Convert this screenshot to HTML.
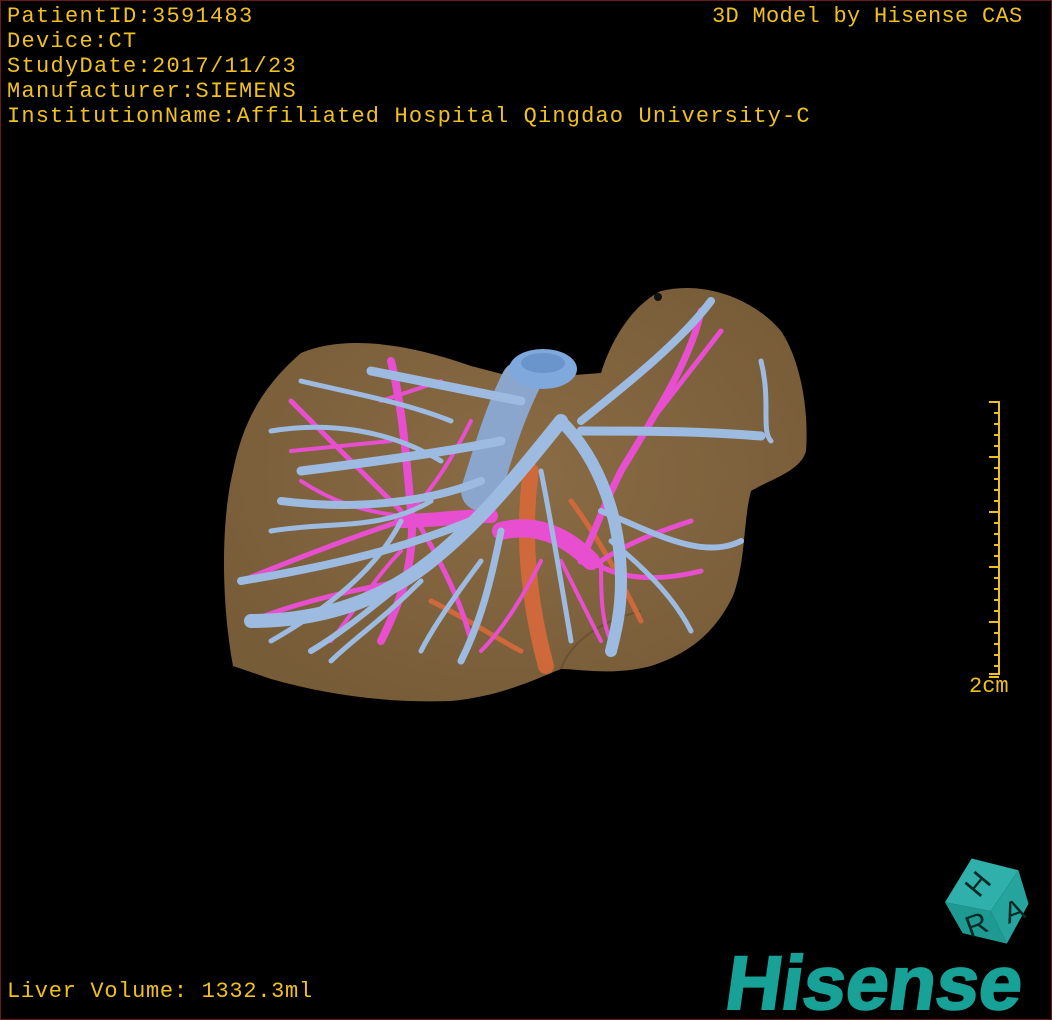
<!DOCTYPE html>
<html><head><meta charset="utf-8"><style>
html,body{margin:0;padding:0;background:#000;}
#w{position:relative;width:1050px;height:1018px;border:1px solid #6a1a1a;overflow:hidden;background:#000;}
.t{position:absolute;font-family:"Liberation Mono",monospace;font-size:22px;color:#f0c020;letter-spacing:1.3px;white-space:pre;line-height:25px;}
</style></head><body><div id="w">
<svg width="1050" height="1018" style="position:absolute;left:0;top:0">
<defs><radialGradient id="lg" cx="0.5" cy="0.45" r="0.6"><stop offset="0" stop-color="#8a6c45"/><stop offset="1" stop-color="#775c38"/></radialGradient></defs>
<path d="M232,665 C220,600 220,520 232,470 C242,420 262,385 300,352 C340,335 400,340 470,365 L520,378 L600,372 C610,340 630,305 660,290 C700,280 750,295 780,330 C800,360 808,410 805,450 C800,470 770,478 750,490 C742,520 745,560 732,595 C715,630 690,652 650,665 C610,675 580,668 560,668 C530,680 500,695 450,700 C390,702 330,695 270,678 Z" fill="url(#lg)"/>
<path d="M560,668 C570,640 600,620 640,610" stroke="#5e4a2e" stroke-width="2" fill="none" opacity=".6"/>
<g fill="none" stroke-linecap="round" stroke="#d8693a" opacity=".9">
<path d="M530,470 C520,540 530,610 545,665" stroke-width="16"/>
<path d="M430,600 C470,620 500,640 520,650" stroke-width="5"/>
<path d="M570,500 C600,540 620,580 640,620" stroke-width="5"/>
</g>
<g fill="none" stroke-linecap="round" stroke="#e84fd0">
<path d="M700,310 C690,360 650,420 620,470 C600,510 590,540 580,560" stroke-width="7"/>
<path d="M650,420 L720,330" stroke-width="5"/>
<path d="M500,530 C540,520 570,540 590,560" stroke-width="18"/>
<path d="M400,520 C430,520 460,515 490,515" stroke-width="14"/>
<path d="M390,360 C400,400 405,450 410,510 C415,560 400,600 380,640" stroke-width="8"/>
<path d="M290,400 C320,430 360,470 400,510" stroke-width="5"/>
<path d="M240,580 C290,560 340,540 400,520" stroke-width="5"/>
<path d="M250,620 C300,600 350,590 400,580" stroke-width="5"/>
<path d="M300,480 C330,500 360,510 400,515" stroke-width="4"/>
<path d="M410,510 C440,560 460,600 470,640" stroke-width="5"/>
<path d="M330,640 C360,600 380,570 400,550" stroke-width="4"/>
<path d="M470,420 C450,460 430,490 410,510" stroke-width="4"/>
<path d="M600,560 C630,540 660,530 690,520" stroke-width="5"/>
<path d="M590,560 C620,580 660,580 700,570" stroke-width="5"/>
<path d="M600,560 C600,590 600,620 610,640" stroke-width="4"/>
<path d="M540,560 C520,600 500,630 480,650" stroke-width="4"/>
<path d="M560,560 C580,600 590,620 600,640" stroke-width="4"/>
<path d="M380,400 L440,380" stroke-width="4"/>
<path d="M290,450 L390,440" stroke-width="4"/>
</g>
<g fill="none" stroke-linecap="round" stroke="#9dbbe0">
<path d="M520,380 C500,420 490,460 480,490" stroke-width="40" stroke="#8aa6cc"/>
<path d="M560,420 C520,470 480,520 430,560 C380,600 320,620 250,620" stroke-width="14"/>
<path d="M560,420 C600,460 620,520 620,580 C620,610 615,630 610,650" stroke-width="12"/>
<path d="M580,430 C640,430 700,430 760,435" stroke-width="9"/>
<path d="M580,420 C630,380 680,340 710,300" stroke-width="8"/>
<path d="M760,360 C770,400 760,430 770,440" stroke-width="5"/>
<path d="M520,400 C470,390 420,380 370,370" stroke-width="9"/>
<path d="M500,440 C450,450 380,460 300,470" stroke-width="9"/>
<path d="M480,480 C430,500 360,510 280,500" stroke-width="8"/>
<path d="M470,520 C420,540 360,560 240,580" stroke-width="8"/>
<path d="M450,545 C400,580 360,620 310,650" stroke-width="6"/>
<path d="M500,530 C490,580 480,620 460,660" stroke-width="7"/>
<path d="M540,470 C550,520 560,580 570,640" stroke-width="5"/>
<path d="M600,510 C650,530 700,560 740,540" stroke-width="6"/>
<path d="M610,540 C660,580 680,610 690,630" stroke-width="5"/>
<path d="M450,420 C400,400 340,390 300,380" stroke-width="5"/>
<path d="M440,460 C390,430 330,420 270,430" stroke-width="5"/>
<path d="M430,500 C380,530 330,520 270,530" stroke-width="5"/>
<path d="M420,580 C380,620 350,640 330,660" stroke-width="5"/>
<path d="M480,560 C450,600 430,630 420,650" stroke-width="5"/>
<path d="M400,520 C380,560 340,600 270,640" stroke-width="5"/>
</g>
<ellipse cx="542" cy="368" rx="34" ry="20" fill="#7fa8dc"/>
<ellipse cx="542" cy="362" rx="22" ry="10" fill="#6a95cc"/>
<circle cx="657" cy="296" r="4" fill="#111"/>
<g stroke="#f0c020" stroke-width="2" fill="none">
<path d="M988,401 H998 V673 H988"/>
<g id="tk">
<path d="M993,412 H998 M993,423 H998 M993,434 H998 M993,445 H998 M988,456 H998"/>
</g>
<use href="#tk" y="55"/><use href="#tk" y="110"/><use href="#tk" y="165"/><use href="#tk" y="220" />
</g>
<g transform="translate(985,897) rotate(-20)">
<polygon points="-40,-10 0,-42 40,-15 0,14" fill="#2fb0aa"/>
<polygon points="-40,-10 0,14 4,50 -34,25" fill="#1f9a93"/>
<polygon points="0,14 40,-15 38,20 4,50" fill="#25a39d"/>
<text x="-2" y="-7" font-family="Liberation Sans" font-size="30" fill="#0a2a28" text-anchor="middle" transform="rotate(-30 0 -15)">H</text>
<text x="-18" y="32" font-family="Liberation Sans" font-size="30" fill="#0a2a28" text-anchor="middle">R</text>
<text x="22" y="32" font-family="Liberation Sans" font-size="30" fill="#0a2a28" text-anchor="middle">A</text>
</g>
<g transform="translate(0,1008) skewX(-8)">
<text x="722" y="0" font-family="Liberation Sans" font-weight="bold" font-size="76" fill="#17a197" stroke="#17a197" stroke-width="2" textLength="296" lengthAdjust="spacingAndGlyphs">Hisense</text>
</g>
</svg>
<div class="t" style="left:6px;top:3px">PatientID:3591483
Device:CT
StudyDate:2017/11/23
Manufacturer:SIEMENS
<span style="letter-spacing:1.15px">InstitutionName:Affiliated Hospital Qingdao University-C</span></div>
<div class="t" style="left:711px;top:3px;letter-spacing:0.3px">3D Model by Hisense CAS</div>
<div class="t" style="left:6px;top:978px;letter-spacing:0.7px">Liver Volume: 1332.3ml</div>
<div class="t" style="left:968px;top:673px;letter-spacing:0">2cm</div>
</div></body></html>
